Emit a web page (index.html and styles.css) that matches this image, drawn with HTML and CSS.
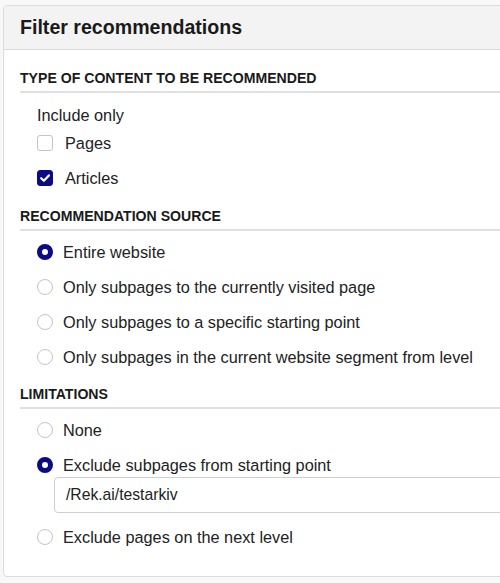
FILE: index.html
```html
<!DOCTYPE html>
<html>
<head>
<meta charset="utf-8">
<link rel="stylesheet" href="styles.css">
</head>
<body>
<div class="viewport">
<div class="panel">
  <div class="panel-header">Filter recommendations</div>
  <div class="panel-body">
    <div class="section-title first">TYPE OF CONTENT TO BE RECOMMENDED</div>
    <div class="group-label">Include only</div>
    <label class="opt check">
      <span class="box"></span><span>Pages</span>
    </label>
    <label class="opt check">
      <span class="box checked"><svg viewBox="0 0 16 16" width="16" height="16"><path d="M4.2 8.2 L6.9 10.8 L11.9 5.4" fill="none" stroke="#fff" stroke-width="2.2" stroke-linecap="round" stroke-linejoin="round"/></svg></span><span>Articles</span>
    </label>

    <div class="section-title second">RECOMMENDATION SOURCE</div>
    <div class="options">
      <label class="opt radio"><span class="dot on"></span><span>Entire website</span></label>
      <label class="opt radio"><span class="dot"></span><span>Only subpages to the currently visited page</span></label>
      <label class="opt radio"><span class="dot"></span><span>Only subpages to a specific starting point</span></label>
      <label class="opt radio"><span class="dot"></span><span>Only subpages in the current website segment from level</span></label>
    </div>

    <div class="section-title third">LIMITATIONS</div>
    <div class="options">
      <label class="opt radio"><span class="dot"></span><span>None</span></label>
      <label class="opt radio"><span class="dot on"></span><span>Exclude subpages from starting point</span></label>
      <div class="field">/Rek.ai/testarkiv</div>
      <label class="opt radio last"><span class="dot"></span><span>Exclude pages on the next level</span></label>
    </div>
  </div>
</div>
</div>
</body>
</html>
```
FILE: styles.css
```css
html, body {
  margin: 0;
  padding: 0;
}
body {
  background: #f8f8f8;
  font-family: "Liberation Sans", Arial, sans-serif;
  color: #222;
}
.viewport {
  width: 500px;
  height: 583px;
  overflow: hidden;
}
.panel {
  margin: 5px 0 0 3px;
  width: 540px;
  background: #fff;
  border: 1px solid #dcdcdc;
  border-radius: 4px;
}
.panel-header {
  height: 43px;
  line-height: 43px;
  padding-left: 16px;
  background: #f3f3f3;
  border-bottom: 1px solid #dcdcdc;
  border-radius: 4px 4px 0 0;
  font-size: 19.6px;
  font-weight: bold;
  color: #1a1a1a;
}
.panel-body {
  padding: 0 0 29px 16px;
}
.section-title {
  font-size: 14.1px;
  font-weight: bold;
  line-height: 16px;
  padding-bottom: 5px;
  border-bottom: 2px solid #e0e0e0;
  color: #1a1a1a;
}
.section-title.first {
  margin-top: 20px;
}
.section-title.second {
  margin-top: 13px;
}
.section-title.third {
  margin-top: 4px;
}
.group-label {
  font-size: 16.3px;
  line-height: 20px;
  margin: 12px 0 0 17px;
}
.opt {
  display: flex;
  align-items: center;
  font-size: 16.3px;
  line-height: 20px;
  margin-left: 17px;
}
.opt.check {
  height: 35px;
  gap: 12px;
}
.options {
  display: flex;
  flex-direction: column;
  padding-top: 11px;
}
.opt.radio {
  gap: 10px;
  margin-bottom: 15px;
}
.opt.radio.last {
  margin-bottom: 0;
}
.box {
  width: 16px;
  height: 16px;
  box-sizing: border-box;
  border: 1px solid #c4c4c4;
  border-radius: 3px;
  background: #fff;
  display: flex;
  flex: none;
}
.box.checked {
  background: #0b0b86;
  border-color: #0b0b86;
}
.box svg {
  margin: -1px;
}
.dot {
  width: 16px;
  height: 16px;
  box-sizing: border-box;
  border: 1px solid #c4c4c4;
  border-radius: 50%;
  background: #fff;
  flex: none;
}
.dot.on {
  border: 5px solid #0b0b86;
}
.field {
  margin: -13px 0 14px 34px;
  height: 36px;
  box-sizing: border-box;
  border: 1px solid #cfcfcf;
  border-radius: 4px;
  padding-left: 11px;
  line-height: 34px;
  font-size: 15.7px;
  color: #222;
}
```
